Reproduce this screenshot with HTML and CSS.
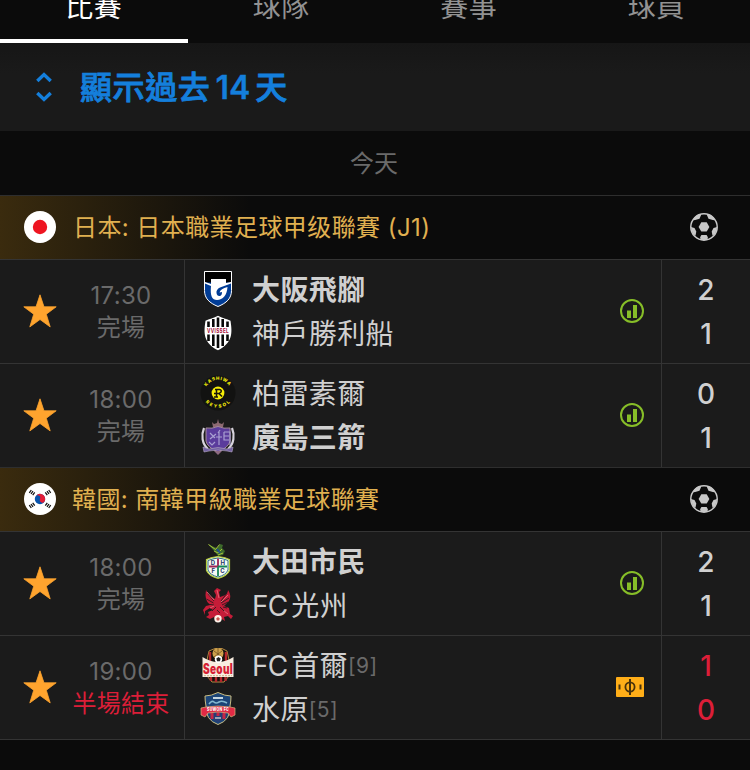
FILE: index.html
```html
<!DOCTYPE html>
<html lang="zh-Hant">
<head>
<meta charset="utf-8">
<title>比賽</title>
<link rel="stylesheet" href="styles.css">
</head>
<body>
<svg class="defs" aria-hidden="true">
  <symbol id="star" viewBox="0 0 34 34"><path d="M17 .8l4 12h12.200L23.300 20.200l3.900 12.700L17 25.500 6.800 32.900l3.900-12.700L.8 12.800H13z" fill="#ffa42e" stroke="#ffa42e" stroke-width=".8" stroke-linejoin="round"/></symbol>
  <symbol id="ball" viewBox="0 0 28 28">
    <circle cx="14" cy="14" r="13.200" fill="none" stroke="#c8c8c8" stroke-width="1.500"/>
    <g fill="#c8c8c8"><path d="M11.300 9.200h5.400l2.700 4.700-2.700 4.500h-5.400l-2.700-4.500z"/><path d="M4.200 4.600L8 1.600l3.200.1-1.700 4-4.300 1.300-2.200.3zM23.800 4.600L20 1.600l-3.200.1 1.700 4 4.300 1.300 2.200.3zM.8 14l3.700 1.100 1.800 3.400-.8 4.300-2.800-2zM27.200 14l-3.700 1.100-1.800 3.400.8 4.300 2.800-2zM10.100 24.200l1.300-2.200h5.200l1.300 2.200-.5 2.800h-6.800z"/></g>
  </symbol>
  <symbol id="stats" viewBox="0 0 24 24"><circle cx="12" cy="12" r="11" fill="none" stroke="#87be28" stroke-width="2"/><path d="M7 11.500h4V19H7zM13 6h4v13h-4z" fill="#87be28"/></symbol>
</svg>

<nav class="tabs">
  <a class="tab active">比賽</a><a class="tab">球隊</a><a class="tab">賽事</a><a class="tab">球員</a>
</nav>
<div class="history">
  <svg width="16" height="30" viewBox="0 0 16 30"><path d="M1.300 9L8 2.500 14.700 9M1.300 21L8 27.500 14.700 21" fill="none" stroke="#147fdc" stroke-width="3.400"/></svg>
  <span class="history-label">顯示過去<b class="num">14</b>天</span>
</div>
<div class="day">今天</div>

<section>
  <header class="league">
    <svg class="flag" viewBox="0 0 32 32"><circle cx="16" cy="16" r="16" fill="#fff"/><circle cx="16" cy="16" r="7.200" fill="#ee1521"/></svg>
    <h2>日本: 日本職業足球甲级聯賽 (J1)</h2>
    <svg class="ball"><use href="#ball"/></svg>
  </header>

  <article class="match">
    <div class="info"><svg class="star"><use href="#star"/></svg><div class="when"><span>17:30</span><span class="state">完場</span></div></div>
    <div class="teams">
      <div class="team winner">
        <svg class="crest" viewBox="0 0 36 36"><path d="M4.500.5h27v19c0 8-5 12.500-13.500 16-8.500-3.500-13.500-8-13.500-16z" fill="#003c96" stroke="#fff"/><path d="M5 1h26v10.500h-5V8H11v3.500H5z" fill="#000"/><path d="M5 11l6 2V8h15v4l5-1v1.500L20 16.500q-4 2-3.500 5.500.500 3.500 3.500 3 2-.5 2-4l-2.500.5q1-4 8-5.500c-.5 8-4.500 13-10.500 13-5 0-7-4-6-14l-6-2.500z" fill="#fff"/></svg>
        <span>大阪飛腳</span>
      </div>
      <div class="team">
        <svg class="crest" viewBox="0 0 36 36"><path d="M18 .7c4 2.500 9 3.300 12.500 5 2 13 2 22-12.500 29.600C3.500 27.700 3.500 18.700 5.500 5.700 9 4 14 3.200 18 .7z" fill="#fff"/><path d="M8.500 6.500V26M13.300 4v27M18 2.500V33M22.700 4v27M27.500 6.500V26" stroke="#080808" stroke-width="2.600"/><path d="M5 12h26v7.500H5z" fill="#fff"/><text x="18" y="17.800" textLength="22" lengthAdjust="spacingAndGlyphs" text-anchor="middle" font-size="5.500" font-weight="700" fill="#a50d38">VVISSEL</text></svg>
        <span>神戶勝利船</span>
      </div>
    </div>
    <div class="media"><svg class="stats"><use href="#stats"/></svg></div>
    <div class="score"><span>2</span><span>1</span></div>
  </article>

  <article class="match">
    <div class="info"><svg class="star"><use href="#star"/></svg><div class="when"><span>18:00</span><span class="state">完場</span></div></div>
    <div class="teams">
      <div class="team">
        <svg class="crest" viewBox="0 0 36 36"><circle cx="18" cy="18" r="17.500" fill="#121211"/><circle cx="18" cy="18" r="6.400" fill="#f7ee08"/><path d="M15 14.500h4.500q2.500.5 1.500 2.500l-2 1.500 3 3M16.500 14.500V22M14 18.500h5M14 22h4" fill="none" stroke="#17150a" stroke-width="1.500"/><path id="arcTop" d="M6.500 11.500a13.200 13.200 0 0 1 23 0" fill="none"/><path id="arcBottom" d="M5.500 27a16.500 16.500 0 0 0 25 0" fill="none"/><g font-size="4.500" font-weight="800" fill="#f7ee08"><text textLength="27"><textPath href="#arcTop">KASHIWA</textPath></text><text textLength="28"><textPath href="#arcBottom">REYSOL</textPath></text></g></svg>
        <span>柏雷素爾</span>
      </div>
      <div class="team winner">
        <svg class="crest" viewBox="0 0 36 36"><path d="M12 3l2 2 3-1 1-4 1 4 3 1 2-2-1 5H13z" fill="#8e6a72"/><path d="M4 9C1 16 2 25 8 30M32 9c3 7 2 16-4 21" fill="none" stroke="#d8d4dc" stroke-width="2.200"/><path d="M6 9q6 1 12-1.500Q24 10 30 9v13q-1 6-12 11Q7 28 6 22z" fill="#5b3c9c" stroke="#a58a9c"/><path d="M10 14l5 5m1-4l-6 5m10-9l-2 3m1-1v13m-3-8h6m2-5h6v13m-6-13v8h5m-5-4h5M9 23l3 3 3-3" fill="none" stroke="#a9a0d2" stroke-width="1.200"/><path d="M3 28l6 2q9-3 18 0l6-2-1 5-5-1q-9-2-18 0l-5 1z" fill="#7362a2" stroke="#b7a8c6" stroke-width=".6"/><path d="M14 32h8l-4 4z" fill="#8e6a82"/></svg>
        <span>廣島三箭</span>
      </div>
    </div>
    <div class="media"><svg class="stats"><use href="#stats"/></svg></div>
    <div class="score"><span>0</span><span>1</span></div>
  </article>
</section>

<section>
  <header class="league">
    <svg class="flag" viewBox="0 0 32 32"><circle cx="16" cy="16" r="16" fill="#fff"/><g transform="rotate(22 16 16)"><circle cx="16" cy="16" r="5.200" fill="#0754ad"/><path d="M10.800 16a5.200 5.200 0 0 1 10.400 0 2.600 2.600 0 0 1-5.200 0 2.600 2.600 0 0 0-5.200 0z" fill="#e41c36"/></g><path d="M5.300 9.800l2-2.800M7 11l2-2.800M8.700 12.200l2-2.800M26.700 9.800l-2-2.800M25 11l-2-2.800M23.300 12.200l-2-2.800M5.300 22.200l2 2.800M7 21l2 2.800M8.700 19.800l2 2.800M26.700 22.200l-2 2.800M25 21l-2 2.800M23.300 19.800l-2 2.800" stroke="#111" stroke-width="1.250"/></svg>
    <h2 class="tight">韓國: 南韓甲級職業足球聯賽</h2>
    <svg class="ball"><use href="#ball"/></svg>
  </header>

  <article class="match">
    <div class="info"><svg class="star"><use href="#star"/></svg><div class="when"><span>18:00</span><span class="state">完場</span></div></div>
    <div class="teams">
      <div class="team winner">
        <svg class="crest" viewBox="0 0 36 36"><path d="M8 1l6 3 3 1 3-4 3 1-1 3 3 3-2 4-5 1-3-4z" fill="#3d6a2b"/><path d="M8.500 1.500l7 5 4-5M14 8l4 2 4-4M18 12l5-2" fill="none" stroke="#b4cc3c" stroke-width=".9"/><path d="M17 6l3 4" stroke="#224e91" stroke-width="1.800"/><path d="M18 13.500q6 .5 11.500 3v11Q27 33 18 35.300 9 33 6.500 27.500v-11Q12 14 18 13.500z" fill="#f7faf4" stroke="#b7cf3c" stroke-width="1.200"/><path d="M18 15q5 .5 10 2.500v9.500q-2 5-10 7-8-2-10-7v-9.500q5-2 10-2.500z" fill="none" stroke="#176070" stroke-width=".9"/><path d="M9 23.500h9M18 15.500v8" stroke="#9c2354" stroke-width="1.800"/><path d="M18 23.500h9M18 23.500V33" stroke="#168658" stroke-width="1.800"/><g font-size="6" font-weight="700" fill="#1d3567" text-anchor="middle"><text x="13.200" y="22">D</text><text x="22.900" y="22">H</text><text x="13.500" y="30">F</text><text x="22.600" y="30">C</text></g></svg>
        <span>大田市民</span>
      </div>
      <div class="team">
        <svg class="crest" viewBox="0 0 36 36"><path d="M6 3q2 6 9 9l1-4-2-4 3-3 4 2-2 2 1 5 3-1q5-2 5-6 4 6 1 11l-5 5 5 2 1 6 3 2-2 3-3-3-4 1 1 4-5-3-3 2-3-3-4 2-4-2 3-2-1-3 5-2-3-2-5 3v4l-2-5 3-4 4-1Q4 13 6 3z" fill="#c51c38"/><path d="M8 7l6 7M6.500 12l7 4M7 17l7 1M27 6l-6 8M29 11l-8 5M28 15l-6 3M16 20l-4 4M20 20l5 5M17 23l3 3M23 20l4 1" stroke="#1b1b1b" stroke-width=".8"/><path d="M7 5l7 8M28 8l-7 7M17 3l2 8M10 21l4-2M24 24l4 3" stroke="#ed7581" stroke-width=".8"/><circle cx="18" cy="31.800" r="3.700" fill="#fff1e8"/><path d="M18 30l1.800 1.400-.7 2h-2.200l-.7-2z" fill="#c75550"/></svg>
        <span><i class="latin">FC</i>光州</span>
      </div>
    </div>
    <div class="media"><svg class="stats"><use href="#stats"/></svg></div>
    <div class="score"><span>2</span><span>1</span></div>
  </article>

  <article class="match live">
    <div class="info"><svg class="star"><use href="#star"/></svg><div class="when"><span>19:00</span><span class="state">半場結束</span></div></div>
    <div class="teams">
      <div class="team">
        <svg class="crest" viewBox="0 0 36 36"><path d="M9 4l6-2.500h7L27 4l2 9v16l-5 6H12l-5-6V13z" fill="#17100d" stroke="#b58a42"/><path d="M10 5v9M26 5v9M11 30v4M16 30v5M21 30v5M25.500 30v4" stroke="#b4272c" stroke-width="2.400"/><circle cx="18" cy="6.500" r="5.500" fill="#cda14c"/><path d="M14 4l8 6m-8 0l8-6m-4-3v11" stroke="#725021" stroke-width=".8"/><path d="M2.500 10Q18 20 33.500 10v20h-31z" fill="#f8ede0"/><circle cx="18.500" cy="12.300" r="3.700" fill="#fff"/><path d="M18.500 10l2.200 1.600-.8 2.600h-2.800l-.8-2.600z" fill="#222"/><text x="18" y="26.500" textLength="30" lengthAdjust="spacingAndGlyphs" text-anchor="middle" font-size="14" font-weight="900" fill="#d51f35">Seoul</text><path d="M4 28.700h28" stroke="#cfad87" stroke-dasharray="2 1"/></svg>
        <span><i class="latin">FC</i>首爾</span><small>[9]</small>
      </div>
      <div class="team">
        <svg class="crest" viewBox="0 0 36 36"><path d="M5 5q6 0 13-3.500Q25 5 31 5q0 5-1 10 1 14-12 18.500Q5 29 6 15 5 10 5 5z" fill="#1c4577" stroke="#cbbd83"/><path d="M9 21h18q-1 7-9 10.500Q10 28 9 21z" fill="#253e76"/><path d="M12 21v7M18 21v4M24 21v7" stroke="#c62645" stroke-width="3"/><path d="M13 7h10" stroke="#d8e6ed" stroke-width="1.800"/><path d="M9 13q3-4 5-2t5 0 8 1" fill="none" stroke="#83b8d0" stroke-width="1.600"/><path d="M1 17l5-1q12-2 24 0l5 1v7l-4 2-3-4q-10-2-20 0l-3 4-4-2z" fill="#e12a45" stroke="#d8b57c" stroke-width=".7"/><text x="18" y="20.400" textLength="22" lengthAdjust="spacingAndGlyphs" text-anchor="middle" font-size="5" font-weight="800" fill="#fff">SUWON FC</text><path d="M15 27h6" stroke="#e9e4da" stroke-width="1.200"/></svg>
        <span>水原</span><small>[5]</small>
      </div>
    </div>
    <div class="media"><svg class="pitch" viewBox="0 0 28 20"><rect width="28" height="20" rx="1" fill="#ffae18"/><circle cx="14" cy="10" r="4.600" fill="none" stroke="#49320b" stroke-width="1.800"/><path d="M14 2v16M3.500 7.500v5M24.500 7.500v5" stroke="#49320b" stroke-width="2"/></svg></div>
    <div class="score"><span>1</span><span>0</span></div>
  </article>
</section>
</body>
</html>
```
FILE: styles.css
```css
* { box-sizing: border-box; }
body {
  margin: 0;
  background: #0b0b0b;
  color: #d0d0d0;
  font-family: Inter, "Noto Sans CJK TC", sans-serif;
}
svg { display: block; flex: none; }
.defs { display: none; }

.tabs {
  display: flex;
  align-items: flex-end;
  height: 43px;
  overflow: hidden;
}
.tab {
  flex: 1;
  height: 68px;
  border-bottom: 4px solid transparent;
  line-height: 64px;
  font-size: 28px;
  letter-spacing: .5px;
  text-align: center;
  color: #929292;
}
.tab.active { color: #fff; border-color: #fff; }

.history {
  display: flex;
  align-items: center;
  gap: 28px;
  height: 88px;
  padding-left: 36px;
  background: linear-gradient(#161616, #1a1a1a 30px);
  color: #147fdc;
}
.history-label {
  padding-top: 1px;
  font-size: 32px;
  font-weight: 500;
  letter-spacing: .6px;
  line-height: 44px;
  -webkit-text-stroke: .8px #147fdc;
}
.num {
  margin: 0 5px 0 5px;
  font-weight: 600;
  letter-spacing: 0;
  -webkit-text-stroke: .3px #147fdc;
}

.day {
  height: 64px;
  padding: 1px 2px 0 0;
  line-height: 64px;
  text-align: center;
  font-size: 24px;
  color: #6a6a6a;
}

.league {
  display: flex;
  align-items: center;
  height: 64px;
  padding: 0 32px 1px 24px;
  border-top: 1px solid #2e2e2e;
  background: linear-gradient(90deg, #3a2b0e, #0b0b0b 250px);
}
.league h2 {
  flex: 1;
  margin: 1px 0 0 17px;
  font-size: 24px;
  font-weight: 400;
  letter-spacing: .42px;
  line-height: 36px;
  color: #e0b050;
}
.league .tight { margin-left: 16px; }
.flag { width: 32px; height: 32px; }
.ball { width: 28px; height: 28px; }

.match {
  display: grid;
  grid-template-columns: 185px 1fr 60px 88px;
  height: 104px;
  border-top: 1px solid #343434;
  background: #1b1b1b;
}
section:last-child { border-bottom: 1px solid #343434; }
.info {
  display: flex;
  align-items: center;
  padding: 0 0 1px 23px;
  border-right: 1px solid #343434;
}
.star { width: 34px; height: 34px; }
.when {
  flex: 1;
  display: flex;
  flex-direction: column;
  padding: 2px 0 0 1px;
  font-size: 24px;
  line-height: 32px;
  letter-spacing: .3px;
  text-align: center;
  color: #6a6a6a;
}
.state { white-space: nowrap; }
.teams { padding: 7px 0 0 15px; }
.team {
  display: flex;
  align-items: center;
  height: 44px;
  font-size: 28px;
  letter-spacing: .4px;
  line-height: 44px;
}
.team > span { padding-top: 2px; }
.crest { width: 36px; height: 36px; margin-right: 16px; }
.winner { font-weight: 600; }
.latin { margin-right: 4px; font-style: normal; letter-spacing: -.9px; }
.team small { padding-top: 2px; font-size: 21px; color: #6a6a6a; }
.media {
  display: flex;
  align-items: center;
  justify-content: center;
  padding-bottom: 1px;
  border-right: 1px solid #343434;
}
.stats { width: 24px; height: 24px; }
.pitch { width: 28px; height: 20px; margin-right: 4px; }
.score {
  display: flex;
  flex-direction: column;
  padding-top: 8px;
  font-size: 28px;
  font-weight: 500;
  line-height: 44px;
  text-align: center;
}
.live .state, .live .score { color: #dc1e38; }
```
